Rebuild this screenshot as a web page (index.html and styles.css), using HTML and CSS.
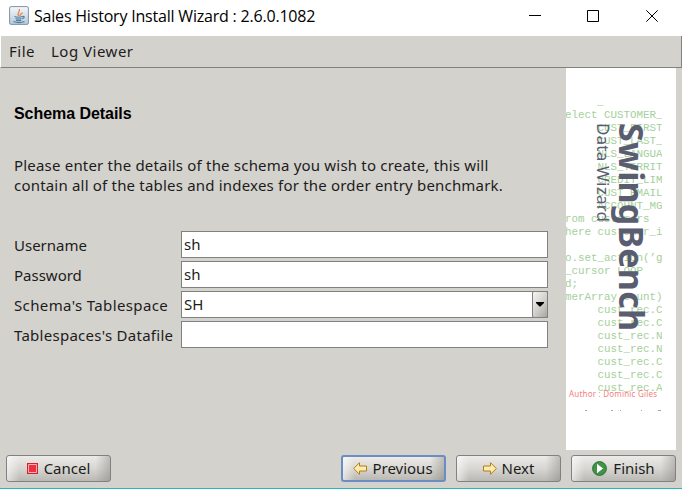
FILE: index.html
```html
<!DOCTYPE html>
<html lang="en">
<head>
<meta charset="utf-8">
<title>Sales History Install Wizard : 2.6.0.1082</title>
<link rel="stylesheet" href="styles.css">
</head>
<body>
<div class="window">
  <header class="titlebar">
    <svg class="app-icon" width="20" height="19" viewBox="0 0 20 19">
      <defs><linearGradient id="tile" x2="0" y2="1"><stop stop-color="#f6f8fa"/><stop offset="1" stop-color="#b4c9da"/></linearGradient></defs>
      <rect x=".6" y=".6" width="18.8" height="17.8" rx="1.5" fill="url(#tile)" stroke="#8193a5"/>
      <path d="M10 10C7 7.500 11.500 6 10.300 3M11.500 10c-1.500-1.500 1.700-2.200 2-3.500" fill="none" stroke="#e58a4e" stroke-width="1.300"/>
      <path d="M5.500 10.500q4 1.400 8 0M6.500 12.500q3 1.200 6 0M7 14.300q2.700 1 5.300 0M13.300 10.500q3-.5 1.500 1.300l-1.600 1M4.500 15.500q5.500 2.200 11 0" fill="none" stroke="#527e9f" stroke-width="1.100"/>
    </svg>
    <h1 class="title">Sales History Install Wizard : 2.6.0.1082</h1>
    <svg class="controls" width="130" height="14" viewBox="0 0 130 14" fill="none" stroke="#000">
      <path d="M0 6.500h12M58.500 1.500h11v11h-11z"/>
      <path d="M117.300 1.300l11.400 11.400M128.700 1.300l-11.400 11.400"/>
    </svg>
  </header>
  <nav class="menubar"><span class="file">File</span><span class="log">Log Viewer</span></nav>
  <main class="main">
    <section class="content">
      <h2>Schema Details</h2>
      <p class="intro"><span class="line">Please enter the details of the schema you wish to create, this will</span><span class="line">contain all of the tables and indexes for the order entry benchmark.</span></p>
      <form class="form">
        <label>Username</label><div class="field">sh</div>
        <label>Password</label><div class="field">sh</div>
        <label class="wide-a">Schema's Tablespace</label><div class="field combo"><span>SH</span><i class="drop"><svg width="8" height="5" viewBox="0 0 8 5"><path d="M0 0h8v1L4.500 4.500h-1L0 1z"/></svg></i></div>
        <label class="wide-b">Tablespaces's Datafile</label><div class="field"></div>
      </form>
    </section>
    <svg class="banner" width="110" height="382" viewBox="566 68 110 382">
      <defs><clipPath id="code-clip"><rect x="566" y="68" width="96" height="343"/></clipPath></defs>
      <g class="code" clip-path="url(#code-clip)">
        <text x="597" y="105">_</text>
        <text x="565" y="118">elect CUSTOMER_</text>
        <text x="597.500" y="131">CUST_FIRST</text>
        <text x="597.500" y="144">CUST_LAST_</text>
        <text x="597.500" y="157">NLS_LANGUA</text>
        <text x="597.500" y="170">NLS_TERRIT</text>
        <text x="597.500" y="183">CREDIT_LIM</text>
        <text x="597.500" y="196">CUST_EMAIL</text>
        <text x="597.500" y="209">ACCOUNT_MG</text>
        <text x="565" y="222">rom customers</text>
        <text x="565" y="235">here customer_i</text>
        <text x="565" y="261">o.set_action(’g</text>
        <text x="565" y="274">_cursor LOOP</text>
        <text x="565" y="287">d;</text>
        <text x="565" y="300">merArray.count)</text>
        <text x="597.500" y="313">cust_rec.C</text>
        <text x="597.500" y="326">cust_rec.C</text>
        <text x="597.500" y="339">cust_rec.N</text>
        <text x="597.500" y="352">cust_rec.N</text>
        <text x="597.500" y="365">cust_rec.C</text>
        <text x="597.500" y="378">cust_rec.C</text>
        <text x="597.500" y="391">cust_rec.A</text>
        <path d="M585 410.500h2M611 410.500h2M620 410.500h1M641 410.500h1M658 410.500h3"/>
      </g>
      <text class="brand" transform="translate(619 123) rotate(90)" textLength="208">SwingBench</text>
      <text class="product" transform="translate(597 123) rotate(90)" textLength="99">Data Wizard</text>
      <text class="author" x="569" y="397" textLength="88">Author : Dominic Giles</text>
    </svg>
  </main>
  <footer class="buttons">
    <div class="button cancel"><svg width="11" height="11" viewBox="0 0 11 11"><path fill="#d51f32" d="M0 0h11v11H0z"/><path fill="#ed3040" stroke="#ffb0b0" d="M1.500 1.500h8v8h-8z"/></svg><span>Cancel</span></div>
    <div class="button previous"><svg width="15" height="13" viewBox="0 0 15 13"><path d="M.7 6.500L6.500.7v3.300H13.500v5H6.500v3.300z" fill="#ffedab" stroke="#b67b18" stroke-linejoin="round"/></svg><span>Previous</span></div>
    <div class="button next"><svg width="15" height="13" viewBox="0 0 15 13"><path d="M14.300 6.500L8.500.7v3.300H1.500v5H8.500v3.300z" fill="#ffedab" stroke="#b67b18" stroke-linejoin="round"/></svg><span>Next</span></div>
    <div class="button finish"><svg width="15" height="15" viewBox="0 0 15 15"><circle cx="7.500" cy="7.500" r="6.900" fill="#42924a" stroke="#277336"/><path d="M5 2.700v9.600L11 7.500z" fill="#fff"/></svg><span>Finish</span></div>
  </footer>
</div>
</body>
</html>
```
FILE: styles.css
```css
* { box-sizing: border-box; }
body { margin: 0; background: #d4d2cd; font: 15px/20px "Noto Sans", sans-serif; color: #1c1c1c; }
h1, h2, p { margin: 0; font-weight: 400; }
.window { width: 682px; height: 489px; display: flex; flex-direction: column; border-bottom: 1px solid #25b7bd; overflow: hidden; }
.titlebar { height: 36px; flex: none; background: #fff; display: flex; padding: 6px 0 0 9px; }
.title { font: 16px/20px "Open Sans", sans-serif; letter-spacing: -.2px; margin-left: 5px; white-space: nowrap; color: #000; }
.controls { margin: 3px 23px 0 auto; flex: none; }
.menubar { height: 32px; flex: none; border-bottom: 1px solid #818181; border-right: 1px solid #818181; border-left: 1px solid #fff; padding: 5px 0 0 8px; display: flex; gap: 16px; }
.file, .log { letter-spacing: .5px; }
.main { display: flex; height: 382px; flex: none; }
.content { width: 566px; padding: 36px 0 0 14px; }
h2 { font: bold 16px/20px "Liberation Sans", sans-serif; letter-spacing: -.05px; color: #000; }
.intro { margin-top: 31px; height: 40px; letter-spacing: .195px; }
.line { display: block; white-space: nowrap; }
.form { margin-top: 36px; display: grid; grid-template-columns: 167px 367px; grid-auto-rows: 27px; row-gap: 3px; }
label { padding-top: 4px; white-space: nowrap; }
.wide-a { letter-spacing: .37px; }
.wide-b { letter-spacing: .27px; }
.field { background: #fff; border: 1px solid #818181; padding: 2px 2px; display: flex; }
.combo { padding-right: 0; }
.drop { width: 16px; margin: -3px -1px -3px auto; border: 1px solid #818181; border-radius: 2px; background: linear-gradient(125deg, #f5f5f5, #d0cfcb 55%, #a8a6a1); display: flex; justify-content: center; padding-top: 10px; }
.banner { background: #fff; flex: none; }
.code { font: 10.83px "Liberation Mono", monospace; fill: #a4d09a; }
.code path { stroke: #8dbd82; }
.brand { font: bold 34px "Noto Sans", sans-serif; fill: #5a5c70; }
.product { font: 17px "Noto Sans", sans-serif; fill: #5a5c70; }
.author { font: 8px "Noto Sans", sans-serif; fill: #f27f83; }
.buttons { display: flex; padding: 5px 6px 0; gap: 10px; }
.button { width: 105px; height: 27px; border: 1px solid #818181; border-radius: 3px; display: flex; align-items: center; justify-content: center; gap: 6px; background: linear-gradient(90deg, #ffffff90, #fff0 12%, #fff0 86%, #85837d70), linear-gradient(#ecebe8, #d8d6d2 50%, #bab8b3); }
.button span { margin-top: -2px; }
.cancel { margin-right: 220px; }
.previous { border: 2px solid #6b8dc4; gap: 4px; }
.previous, .next { padding-right: 1px; }
.next { gap: 5px; }
```
